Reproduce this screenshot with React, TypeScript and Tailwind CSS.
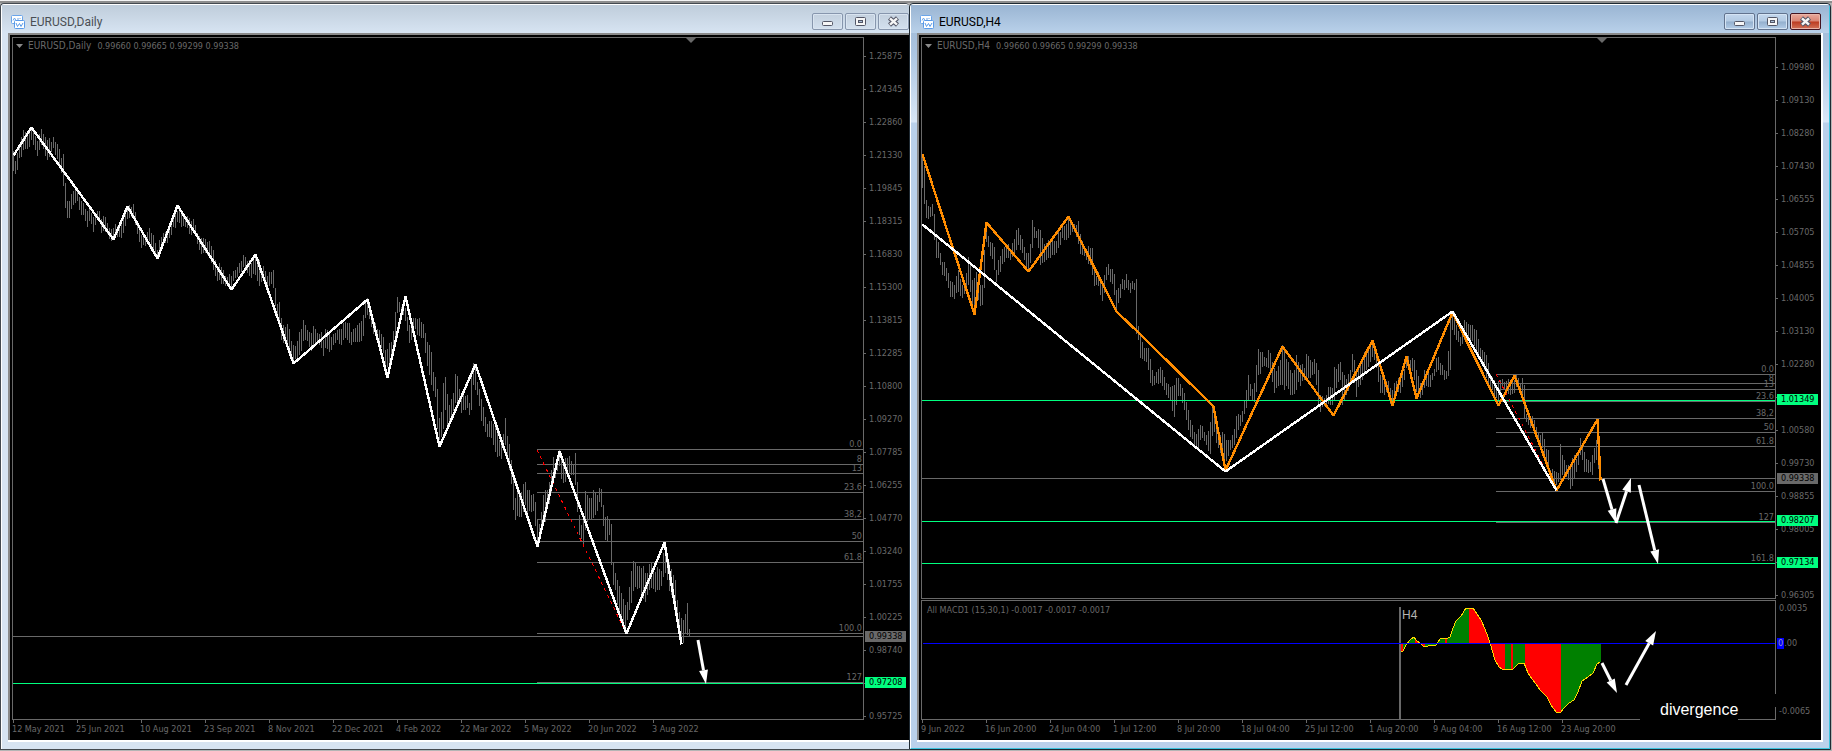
import { useId, type ReactNode } from "react";

type Point = [number, number];
type Bar = [x: number, high: number, low: number];
type Level = { y: number; label?: string };
type Tag = { label: string; className: string };

const LABEL_FONT = "font-['DejaVu_Sans_Condensed','DejaVu_Sans',sans-serif]";

const DAILY_BARS: Bar[] = [
  [13,151,171],[15,161,174],[17,153,170],[19,144,158],[22,132,153],[24,131,150],[28,133,149],[31,127,140],[33,130,145],[37,141,156],[39,134,150],[41,129,145],[43,134,149],[46,138,161],[49,138,157],[51,142,152],[53,137,148],[55,142,155],[58,142,161],[60,158,164],[63,154,186],[65,183,208],[67,201,218],[69,201,218],[71,194,209],[73,191,205],[75,190,203],[77,192,201],[79,197,210],[82,202,214],[84,208,220],[87,211,227],[90,210,217],[93,217,232],[97,211,220],[99,211,222],[101,219,233],[105,217,232],[107,223,234],[109,228,239],[113,228,239],[115,224,238],[120,225,236],[124,215,234],[126,210,220],[128,205,217],[131,207,217],[134,206,221],[136,217,230],[139,227,242],[142,238,248],[145,237,246],[148,227,237],[151,233,247],[154,239,256],[157,250,258],[160,237,249],[163,233,241],[166,232,246],[169,224,238],[172,221,230],[175,211,228],[178,208,219],[181,213,227],[184,218,228],[187,216,228],[190,220,235],[193,219,229],[196,228,241],[199,236,250],[203,238,253],[206,239,255],[210,243,256],[213,250,270],[216,265,281],[219,263,280],[222,268,283],[224,276,288],[228,275,285],[231,276,289],[234,271,280],[237,267,277],[240,263,270],[242,257,269],[245,257,268],[248,260,275],[252,263,276],[254,255,276],[256,252,275],[258,258,286],[261,268,282],[264,268,283],[267,276,290],[269,272,286],[272,270,280],[274,274,300],[276,302,313],[279,302,325],[281,318,340],[284,331,347],[286,322,340],[288,322,345],[290,338,350],[293,345,360],[296,346,360],[298,331,355],[300,335,353],[302,320,345],[305,325,340],[308,330,342],[310,335,350],[313,326,347],[316,330,342],[319,334,345],[321,332,348],[323,340,356],[326,324,345],[328,332,352],[331,337,350],[334,335,346],[337,330,340],[340,330,344],[343,323,340],[346,321,338],[348,320,341],[351,332,345],[354,330,344],[357,325,342],[360,323,340],[363,315,336],[365,303,318],[367,298,315],[370,306,320],[373,318,334],[376,325,335],[379,330,342],[382,334,348],[385,350,370],[388,345,365],[391,342,360],[393,331,345],[395,312,342],[397,297,313],[399,302,312],[401,307,318],[403,303,315],[406,310,325],[409,325,343],[411,325,340],[414,317,328],[417,319,335],[420,319,335],[423,324,338],[426,338,362],[429,345,375],[431,352,385],[433,372,391],[435,377,397],[437,389,429],[439,418,440],[441,412,437],[443,383,429],[445,377,410],[447,394,427],[449,405,421],[451,399,418],[453,393,411],[455,374,403],[457,376,404],[459,389,400],[461,396,413],[464,396,412],[467,395,408],[469,403,415],[471,370,410],[473,363,385],[475,365,390],[478,388,398],[480,391,412],[482,405,426],[485,417,432],[488,425,440],[490,418,432],[493,424,445],[496,425,457],[499,440,456],[502,445,457],[505,418,445],[507,436,455],[509,444,470],[511,460,484],[513,475,510],[515,498,520],[517,492,516],[520,495,516],[523,484,512],[525,482,505],[527,490,515],[530,492,508],[532,495,512],[534,497,514],[536,506,540],[538,530,545],[540,520,538],[542,501,525],[545,490,522],[547,490,508],[550,480,500],[552,458,480],[554,460,478],[556,465,480],[558,450,462],[560,452,468],[562,462,486],[565,458,482],[568,455,472],[570,458,472],[573,465,475],[575,453,485],[577,482,512],[579,515,535],[581,525,539],[583,513,544],[585,491,530],[587,495,522],[590,501,516],[593,490,518],[596,495,515],[599,488,502],[601,489,507],[603,505,526],[605,517,540],[607,516,542],[609,520,535],[611,524,565],[613,562,585],[615,573,590],[617,580,605],[620,590,622],[622,594,620],[624,608,632],[626,602,628],[628,598,612],[630,577,605],[632,562,597],[634,563,588],[636,561,588],[638,566,590],[640,567,584],[642,566,600],[645,573,602],[648,570,592],[650,560,585],[652,561,586],[654,575,595],[657,567,590],[660,572,588],[662,567,580],[664,543,578],[666,549,570],[668,560,590],[670,565,590],[673,575,598],[675,580,606],[677,600,620],[679,612,635],[681,618,640],[683,620,643],[685,614,633],[687,603,635],[689,629,637],
];

const H4_BARS: Bar[] = [
  [922,158,188],[924,166,204],[926,200,218],[928,206,219],[930,207,217],[932,204,216],[934,214,240],[936,235,258],[939,247,257],[942,262,275],[945,262,278],[948,273,288],[951,284,299],[954,285,299],[957,268,290],[959,274,292],[962,285,298],[965,278,294],[968,257,285],[970,262,292],[972,280,306],[974,278,312],[976,272,305],[978,275,300],[980,285,306],[982,285,305],[984,250,288],[986,228,242],[988,236,247],[991,244,257],[994,247,270],[996,270,282],[998,260,275],[1001,253,268],[1004,247,262],[1007,242,256],[1010,250,260],[1013,243,258],[1016,230,250],[1018,228,245],[1020,235,250],[1023,244,257],[1026,253,268],[1029,255,268],[1032,220,248],[1034,227,238],[1037,230,238],[1040,230,265],[1043,245,265],[1046,243,260],[1049,240,256],[1052,238,255],[1055,243,256],[1058,232,248],[1061,230,240],[1064,226,240],[1067,220,240],[1069,218,233],[1072,222,232],[1075,225,233],[1077,220,240],[1079,223,246],[1081,242,258],[1084,246,256],[1087,247,262],[1090,248,265],[1092,248,275],[1094,270,286],[1096,276,285],[1099,272,285],[1101,280,300],[1103,285,305],[1105,265,283],[1108,264,275],[1111,270,282],[1114,274,295],[1116,290,312],[1118,288,303],[1121,281,292],[1124,280,290],[1126,274,288],[1128,280,290],[1131,283,292],[1134,283,290],[1136,279,334],[1138,326,340],[1140,335,358],[1143,348,362],[1146,348,362],[1149,350,373],[1151,365,388],[1153,378,387],[1156,372,383],[1160,367,383],[1162,370,386],[1165,380,393],[1168,384,398],[1171,387,400],[1173,388,425],[1176,378,405],[1179,380,390],[1182,388,403],[1185,395,415],[1188,410,430],[1191,424,438],[1194,432,448],[1197,432,450],[1200,425,440],[1203,430,440],[1206,435,445],[1209,430,453],[1211,412,450],[1213,405,425],[1215,410,440],[1218,435,448],[1221,434,452],[1223,433,455],[1225,434,465],[1227,442,457],[1230,440,450],[1233,435,450],[1236,416,438],[1239,415,425],[1242,411,422],[1245,395,412],[1248,375,400],[1250,384,396],[1253,395,405],[1255,370,400],[1258,349,375],[1261,352,370],[1264,357,366],[1267,355,367],[1269,347,366],[1272,362,382],[1274,368,393],[1277,370,385],[1280,360,385],[1282,345,385],[1284,350,390],[1287,360,384],[1290,370,395],[1293,378,398],[1296,355,390],[1298,362,382],[1301,365,385],[1304,368,380],[1306,354,378],[1309,358,376],[1312,362,375],[1315,357,375],[1318,370,405],[1320,395,412],[1323,400,408],[1326,395,405],[1329,385,402],[1332,388,405],[1334,367,400],[1337,367,382],[1340,362,380],[1342,372,405],[1344,375,400],[1347,378,392],[1350,370,385],[1352,354,372],[1354,360,383],[1356,372,397],[1359,365,380],[1361,365,385],[1364,352,375],[1367,348,368],[1370,347,362],[1373,343,357],[1376,350,368],[1378,365,382],[1381,378,395],[1384,382,395],[1387,378,390],[1389,385,400],[1392,390,405],[1395,380,398],[1398,378,392],[1401,372,390],[1403,375,388],[1406,356,368],[1408,356,365],[1411,360,370],[1414,360,380],[1416,370,392],[1419,380,397],[1422,385,395],[1424,370,388],[1427,372,385],[1430,375,387],[1433,375,380],[1436,358,372],[1438,357,370],[1441,365,375],[1444,370,380],[1447,368,378],[1450,320,370],[1452,315,330],[1454,312,335],[1456,325,340],[1459,335,342],[1461,337,345],[1463,325,347],[1465,315,335],[1467,325,335],[1470,325,340],[1473,328,345],[1476,330,350],[1479,345,358],[1482,350,362],[1484,352,370],[1486,355,378],[1489,368,385],[1491,378,390],[1494,380,395],[1497,385,400],[1499,378,398],[1501,380,390],[1504,382,390],[1507,378,392],[1510,385,395],[1513,382,397],[1516,375,387],[1518,378,388],[1520,383,390],[1523,378,400],[1524,385,418],[1526,414,422],[1529,415,425],[1532,416,427],[1535,422,435],[1538,432,442],[1541,435,450],[1543,433,450],[1545,445,460],[1548,450,470],[1550,470,482],[1553,471,485],[1556,472,485],[1558,473,482],[1560,444,480],[1562,455,475],[1565,462,475],[1568,465,480],[1571,470,490],[1573,450,485],[1575,460,475],[1578,452,465],[1580,438,455],[1582,445,460],[1584,452,472],[1587,460,472],[1590,462,472],[1592,455,475],[1595,445,458],[1597,430,462],[1600,460,480],
];

const DAILY_SWINGS: Point[] = [
  [13,155],[31,127],[113,239],[127,206],[157,258],[177,205],[231,289],[255,254],[293,363],[367,299],[387,377],[405,296],[439,446],[475,364],[537,546],[559,451],[626,633],[664,542],[681,644],
];
const H4_SWINGS: Point[] = [
  [922,154],[974,314],[986,222],[1028,271],[1068,216],[1116,311],[1141,335],[1213,406],[1225,470],[1282,346],[1333,415],[1372,340],[1392,405],[1406,356],[1416,398],[1452,312],[1498,405],[1514,375],[1556,490],[1597,419],[1600,480],
];
const H4_TREND: Point[] = [[922,224],[1225,471],[1452,311],[1556,490]];

const DAILY_FIBS: Level[] = [
  { y: 449, label: "0.0" },
  { y: 464, label: "8" },
  { y: 473, label: "13" },
  { y: 492, label: "23.6" },
  { y: 519, label: "38,2" },
  { y: 541, label: "50" },
  { y: 562, label: "61.8" },
  { y: 633, label: "100.0" },
  { y: 682, label: "127" },
];
const H4_FIBS: Level[] = [
  { y: 374, label: "0.0" },
  { y: 383, label: "8" },
  { y: 389, label: "13" },
  { y: 401, label: "23.6" },
  { y: 418, label: "38,2" },
  { y: 432, label: "50" },
  { y: 446, label: "61.8" },
  { y: 491, label: "100.0" },
  { y: 522, label: "127" },
  { y: 563, label: "161.8" },
];

const MACD_LINE: Point[] = [
  [1401,651],[1403,651],[1406,645],[1410,640],[1414,637],[1417,641],[1420,643],[1424,647],[1428,646],[1436,645],[1440,639],[1448,638],[1450,637],[1453,628],[1456,621],[1461,616],[1466,608],[1473,608],[1477,614],[1481,620],[1485,629],[1488,637],[1491,646],[1495,660],[1499,667],[1502,669],[1513,669],[1518,664],[1524,663],[1528,673],[1532,679],[1536,684],[1540,690],[1547,697],[1551,705],[1556,712],[1560,713],[1564,708],[1569,703],[1574,700],[1578,692],[1582,681],[1588,677],[1593,673],[1597,664],[1600,662],
];
const MACD_BANDS: { from: number; to: number; up: boolean }[] = [
  { from: 1401, to: 1403, up: false },
  { from: 1403, to: 1415, up: true },
  { from: 1415, to: 1425, up: false },
  { from: 1425, to: 1445, up: true },
  { from: 1445, to: 1447, up: false },
  { from: 1447, to: 1469, up: true },
  { from: 1469, to: 1505, up: false },
  { from: 1505, to: 1511, up: true },
  { from: 1511, to: 1513, up: false },
  { from: 1513, to: 1525, up: true },
  { from: 1525, to: 1561, up: false },
  { from: 1561, to: 1601, up: true },
];

const DAILY_PRICES = [
  "1.25875","1.24345","1.22860","1.21330","1.19845","1.18315","1.16830","1.15300","1.13815","1.12285","1.10800","1.09270","1.07785","1.06255","1.04770","1.03240","1.01755","1.00225","0.98740","","0.95725",
];
const H4_PRICES = [
  "1.09980","1.09130","1.08280","1.07430","1.06555","1.05705","1.04855","1.04005","1.03130","1.02280","","1.00580","0.99730","0.98855","0.98005","","0.96305",
];
const DAILY_TIMES = [
  "12 May 2021","25 Jun 2021","10 Aug 2021","23 Sep 2021","8 Nov 2021","22 Dec 2021","4 Feb 2022","22 Mar 2022","5 May 2022","20 Jun 2022","3 Aug 2022",
];
const H4_TIMES = [
  "9 Jun 2022","16 Jun 20:00","24 Jun 04:00","1 Jul 12:00","8 Jul 20:00","18 Jul 04:00","25 Jul 12:00","1 Aug 20:00","9 Aug 04:00","16 Aug 12:00","23 Aug 20:00",
];

const toPoints = (points: Point[]) => points.map((p) => p.join(",")).join(" ");

/** One path with a vertical stroke every two units, interpolated between the samples. */
function barPath(bars: Bar[]): string {
  let d = "";
  let k = 0;
  const last = bars[bars.length - 1][0];
  for (let x = bars[0][0], i = 0; x <= last; x += 2, i++) {
    while (k < bars.length - 2 && bars[k + 1][0] <= x) k++;
    const [x0, h0, l0] = bars[k];
    const [x1, h1, l1] = bars[k + 1];
    const t = Math.min(1, (x - x0) / (x1 - x0));
    const exact = t === 0 || t === 1;
    const high = Math.round(h0 + (h1 - h0) * t) + (exact ? 0 : ((i * 7) % 5) - 2);
    const low = Math.round(l0 + (l1 - l0) * t) + (exact ? 0 : ((i * 11) % 5) - 2);
    d += `M${x + 0.5} ${high}V${Math.max(low, high + 4)}`;
  }
  return d;
}

function Bars({ bars }: { bars: Bar[] }) {
  return <path d={barPath(bars)} stroke="#696969" fill="none" shapeRendering="crispEdges" />;
}

function Swing({ points, color }: { points: Point[]; color: string }) {
  return (
    <polyline
      points={toPoints(points)}
      transform="translate(0.5 0.5)"
      fill="none"
      stroke={color}
      strokeWidth={2.4}
      strokeLinejoin="bevel"
      shapeRendering="crispEdges"
    />
  );
}

function HLine({ y, from, to, color }: { y: number; from: number; to: number; color: string }) {
  return <rect x={from} y={y} width={to - from} height={1} fill={color} />;
}

function Fibs({ levels, from, to }: { levels: Level[]; from: number; to: number }) {
  return (
    <g className={`text-[9px] ${LABEL_FONT}`} fill="#696969">
      {levels.map(({ y, label }) => (
        <g key={y}>
          <HLine y={y} from={from} to={to} color="#696969" />
          <text x={to - 1} y={y - 2} textAnchor="end">
            {label}
          </text>
        </g>
      ))}
    </g>
  );
}

function Arrow({ from, to }: { from: Point; to: Point }) {
  const dx = to[0] - from[0];
  const dy = to[1] - from[1];
  const len = Math.hypot(dx, dy);
  const ux = dx / len;
  const uy = dy / len;
  const bx = to[0] - ux * 14;
  const by = to[1] - uy * 14;
  return (
    <g fill="#fff" stroke="#fff">
      <line x1={from[0]} y1={from[1]} x2={bx} y2={by} strokeWidth={3} />
      <polygon
        stroke="none"
        points={`${to[0]},${to[1]} ${bx - uy * 4.5},${by + ux * 4.5} ${bx + uy * 4.5},${by - ux * 4.5}`}
      />
    </g>
  );
}

function ShiftMarker({ x }: { x: number }) {
  return <polygon points={`${x - 5},38 ${x + 5},38 ${x},43`} fill="#696969" />;
}

function ChartIcon() {
  return (
    <svg width="14" height="14" viewBox="0 0 14 14" aria-hidden="true">
      <rect x="0.5" y="0.5" width="11" height="8" rx="1" fill="#fff" stroke="#6aa5ea" />
      <path d="M2 5.5L3.500 3L5 5.500M7 3v2M9 3v1" stroke="#6aa5ea" fill="none" />
      <rect x="3.500" y="5.500" width="10" height="8" rx="1" fill="#fff" stroke="#5a9ae8" />
      <path d="M5 8l1.500 3.500L8.500 8.500L10 11.500L12 8" stroke="#5a9ae8" fill="none" />
    </svg>
  );
}

function CaptionButton({ kind, active }: { kind: "Minimize" | "Restore" | "Close"; active: boolean }) {
  const tone = !active
    ? "border-[#8796ad] bg-linear-to-b from-[#c3d0de] to-[#d3e0ee] shadow-[inset_0_0_0_1px_#d9e4f0]"
    : kind === "Close"
      ? "border-[#431320] bg-[linear-gradient(#e8a99d_0%,#d98473_48%,#bc3a20_52%,#d2735a_100%)] shadow-[inset_0_0_0_1px_#e9b5a9]"
      : "border-[#62738e] bg-[linear-gradient(#c3d7ed_0%,#b3cae3_48%,#93afcd_52%,#b4cde8_100%)] shadow-[inset_0_0_0_1px_#d5e4f4]";
  return (
    <button type="button" aria-label={kind} className={`flex h-[17px] w-[31px] items-center justify-center rounded-xs border ${tone}`}>
      <svg width="13" height="11" viewBox="0 0 13 11" aria-hidden="true">
        {kind === "Minimize" && <rect x="1.500" y="5.500" width="10" height="4" rx="1" fill="#f6f6f6" stroke="#535666" />}
        {kind === "Restore" && (
          <>
            <rect x="1.500" y="1.500" width="10" height="8" rx="1" fill="#f6f6f6" stroke="#535666" />
            <rect x="4.500" y="4.500" width="4" height="2" fill="#a9bdd5" stroke="#535666" />
          </>
        )}
        {kind === "Close" && (
          <>
            <path d="M2.500 2L10.500 9M10.500 2L2.500 9" stroke="#535666" strokeWidth="4.500" />
            <path d="M3 2.400L10 8.600M10 2.400L3 8.600" stroke="#f6f6f6" strokeWidth="2.500" />
          </>
        )}
      </svg>
    </button>
  );
}

function ChartWindow({ title, active, children }: { title: string; active: boolean; children: ReactNode }) {
  const frame = active
    ? "border-r border-[#1f2a33] bg-[linear-gradient(#9ab5d3_0px,#adc6e2_50px,#d9e7f7_118px,#bad1eb_119px)]"
    : "border-[#444a50] bg-[#d7e4f2]";
  const inner = active ? "border-r border-r-[#3cc3dd] border-b border-b-[#3cc3dd]" : "";
  const bar = active ? "from-[#9ab5d3] to-[#b9d1ea] pr-2 text-black" : "from-[#bfcddb] to-[#d7e4f2] text-[#4a4f55]";
  const body = active ? "mr-[6px] mb-[6px] border-r-2" : "mb-[7px]";
  return (
    <section className={`flex min-w-0 flex-col rounded-t border-t border-b border-l ${frame}`}>
      <div className={`flex grow flex-col rounded-t border-t border-l border-t-white border-l-white ${inner}`}>
        <header className={`flex h-7 items-start justify-between bg-linear-to-b pt-2 pl-[9px] ${bar}`}>
          <div className="flex items-center gap-[5px] pt-px">
            <ChartIcon />
            <h2 className="font-[Roboto,sans-serif] text-xs leading-4">{title}</h2>
          </div>
          <div className="flex gap-[2px]">
            <CaptionButton kind="Minimize" active={active} />
            <CaptionButton kind="Restore" active={active} />
            <CaptionButton kind="Close" active={active} />
          </div>
        </header>
        <div className={`ml-[6px] flex grow flex-col border-r-white border-b-2 border-b-white ${body}`}>
          <div className="grow border-t-2 border-l-2 border-t-[#8a8a8a] border-l-[#8a8a8a] bg-black pt-[2px] pl-[2px]">
            {children}
          </div>
        </div>
      </div>
    </section>
  );
}

function Quote({ symbol }: { symbol: string }) {
  return (
    <p className="absolute top-[2px] left-[3px] flex items-center text-[9px] leading-3 whitespace-nowrap">
      <svg width="7" height="4" viewBox="0 0 7 4" className="mr-[5px]" aria-hidden="true">
        <polygon points="0,0 7,0 3.500,4" fill="#8a8a8a" />
      </svg>
      <span className="mr-[6px] text-[10px]">{symbol}</span>
      <span>0.99660 0.99665 0.99299 0.99338</span>
    </p>
  );
}

function PriceAxis({ prices, tags, className }: { prices: string[]; tags: Tag[]; className: string }) {
  return (
    <div className={`relative ${className}`}>
      <ul>
        {prices.map((price, i) => (
          <li key={i} className="flex h-[33px] items-center gap-[3px]">
            <span className="h-px w-[2px] bg-[#696969]" />
            <span>{price}</span>
          </li>
        ))}
      </ul>
      {tags.map((tag) => (
        <span key={tag.label} className={`absolute left-px h-[11px] w-[41px] pl-1 leading-[11px] text-black ${tag.className}`}>
          {tag.label}
        </span>
      ))}
    </div>
  );
}

function TimeAxis({ times }: { times: string[] }) {
  return (
    <ul className="flex h-5 overflow-hidden">
      {times.map((time) => (
        <li key={time} className="w-16 shrink-0 whitespace-nowrap">
          <span className="ml-px block h-[3px] w-px bg-[#696969]" />
          <span className="block leading-3">{time}</span>
        </li>
      ))}
    </ul>
  );
}

function DailyChart() {
  return (
    <div className={`grid grid-cols-[minmax(0,1fr)_45px] text-[9px] text-[#696969] ${LABEL_FONT}`}>
      <div className="relative self-start border border-[#696969]">
        <svg viewBox="13 38 850 681" preserveAspectRatio="xMaxYMin slice" className="block h-[681px] w-full" role="img" aria-label="EURUSD Daily price chart">
          <ShiftMarker x={691} />
          <Bars bars={DAILY_BARS} />
          <HLine y={636} from={13} to={863} color="#696969" />
          <Fibs levels={DAILY_FIBS} from={537} to={863} />
          <HLine y={683} from={13} to={863} color="#00ff7f" />
          <line x1="537" y1="450" x2="626" y2="633" stroke="#f00" strokeDasharray="3 4" shapeRendering="crispEdges" />
          <Swing points={DAILY_SWINGS} color="#fff" />
          <Arrow from={[698, 640]} to={[706, 684]} />
        </svg>
        <Quote symbol="EURUSD,Daily" />
      </div>
      <PriceAxis
        prices={DAILY_PRICES}
        className="-mb-4 pt-[3px]"
        tags={[
          { label: "0.99338", className: "top-[594px] bg-[#696969]" },
          { label: "0.97208", className: "top-[640px] bg-[#00ff7f]" },
        ]}
      />
      <TimeAxis times={DAILY_TIMES} />
    </div>
  );
}

function Macd() {
  const clip = useId();
  return (
    <svg viewBox="922 601 853 118" preserveAspectRatio="xMaxYMin slice" className="block h-[118px] w-full" role="img" aria-label="MACD histogram">
      <clipPath id={clip}>
        <polygon points={`1401,643 ${toPoints(MACD_LINE)} 1601,662 1601,643`} />
      </clipPath>
      <rect x="1399" y="607" width="2" height="112" fill="#696969" />
      <g clipPath={`url(#${clip})`}>
        {MACD_BANDS.map((b) => (
          <rect key={b.from} x={b.from} y="601" width={b.to - b.from} height="118" fill={b.up ? "#008000" : "#ff0000"} />
        ))}
      </g>
      <polyline points={toPoints(MACD_LINE)} fill="none" stroke="#ffd700" shapeRendering="crispEdges" />
      <HLine y={643} from={923} to={1775} color="#0000ff" />
      <text x="1402" y="619" fill="#b4b4b4" className="font-['Liberation_Sans',sans-serif] text-xs">
        H4
      </text>
      <Arrow from={[1602, 663]} to={[1617, 693]} />
      <Arrow from={[1626, 685]} to={[1656, 631]} />
    </svg>
  );
}

function H4Chart() {
  return (
    <div className={`grid grid-cols-[minmax(0,1fr)_45px] text-[9px] text-[#696969] ${LABEL_FONT}`}>
      <div className="relative self-start border border-[#696969]">
        <svg viewBox="922 38 853 560" preserveAspectRatio="xMaxYMin slice" className="block h-[560px] w-full" role="img" aria-label="EURUSD H4 price chart">
          <ShiftMarker x={1602} />
          <Bars bars={H4_BARS} />
          <HLine y={478} from={922} to={1775} color="#696969" />
          <Fibs levels={H4_FIBS} from={1496} to={1775} />
          <HLine y={400} from={922} to={1775} color="#00ff7f" />
          <HLine y={521} from={922} to={1775} color="#00ff7f" />
          <HLine y={563} from={922} to={1775} color="#00ff7f" />
          <line x1="1496" y1="374" x2="1556" y2="490" stroke="#f00" strokeDasharray="3 4" shapeRendering="crispEdges" />
          <Swing points={H4_SWINGS} color="#ff8c00" />
          <Swing points={H4_TREND} color="#fff" />
          <Arrow from={[1603, 479]} to={[1616, 523]} />
          <Arrow from={[1616, 523]} to={[1631, 478]} />
          <Arrow from={[1639, 485]} to={[1658, 564]} />
        </svg>
        <Quote symbol="EURUSD,H4" />
      </div>
      <PriceAxis
        prices={H4_PRICES}
        className="-mb-4 pt-[14px]"
        tags={[
          { label: "1.01349", className: "top-[357px] bg-[#00ff7f]" },
          { label: "0.99338", className: "top-[436px] bg-[#696969]" },
          { label: "0.98207", className: "top-[478px] bg-[#00ff7f]" },
          { label: "0.97134", className: "top-[520px] bg-[#00ff7f]" },
        ]}
      />
      <div className="relative mt-px border border-[#696969]">
        <Macd />
        <p className="absolute top-[3px] left-[5px] text-[9px] leading-3">All MACD1 (15,30,1) -0.0017 -0.0017 -0.0017</p>
        <p className="absolute -right-px -bottom-px flex h-[26px] w-[136px] items-start">
          <span className="h-full w-[98px] bg-black pl-5 font-['Liberation_Sans',sans-serif] text-base leading-8 text-white">divergence</span>
          <span className="h-[13px] grow bg-black" />
        </p>
      </div>
      <div className="mt-px pt-[2px]">
        <p className="pl-[3px] leading-3">0.0035</p>
        <p className="mt-6 pl-px leading-[11px]">
          <span className="inline-block bg-[#0000ff] px-px text-[#9a9ab0]">0</span>.00
        </p>
        <p className="mt-14 pl-[3px] leading-3">-0.0065</p>
      </div>
      <TimeAxis times={H4_TIMES} />
    </div>
  );
}

export default function App() {
  return (
    <main className="flex min-h-screen flex-col bg-[#ececec]">
      <div className="h-[3px] border-b-2 border-[#8d8d8d] bg-[#f4f4f4]" />
      <div className="grid grow grid-cols-[minmax(0,909fr)_minmax(0,922fr)] bg-[#b5b5b5] pr-px pb-px">
        <ChartWindow title="EURUSD,Daily" active={false}>
          <DailyChart />
        </ChartWindow>
        <ChartWindow title="EURUSD,H4" active>
          <H4Chart />
        </ChartWindow>
      </div>
    </main>
  );
}
